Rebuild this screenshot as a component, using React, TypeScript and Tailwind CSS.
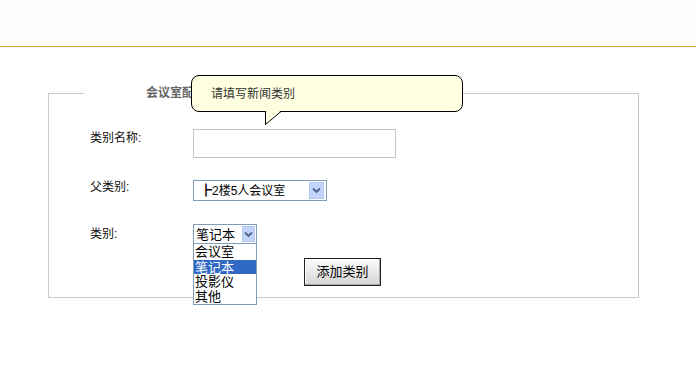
import React from "react";

const font = { fontFamily: '"Liberation Sans", "Noto Sans CJK SC", sans-serif' };

function Chevron() {
  return (
    <svg width="9" height="7" viewBox="0 0 9 7">
      <path d="M1 1.5 L4.5 5 L8 1.5" fill="none" stroke="#4d6185" strokeWidth="1.8" />
    </svg>
  );
}

export default function App() {
  return (
    <div className="relative w-[696px] h-[368px] bg-white overflow-hidden text-[12px] text-[#222]" style={font}>
      <div className="h-[46px] bg-[#fefffd]" />
      <div className="h-[1px] bg-[#e3a940]" />

      <fieldset className="ml-[48px] mt-[38px] w-[591px] border border-[#c9c9c9] px-[35px] pb-[11px]">
        <legend className="pl-[62px] pr-[4px] leading-[17px] font-bold text-[#666]">会议室配置</legend>

        <div className="pl-[6px]">
          <div className="mt-[27px] flex items-start">
            <span className="w-[103px] text-[#111] leading-[16px] mt-[1px]">类别名称:</span>
            <div className="w-[203px] h-[29px] border border-[#c4c4c4] bg-white" />
          </div>

          <div className="mt-[22px] flex items-start">
            <span className="w-[103px] text-[#111] leading-[16px] -mt-[1px]">父类别:</span>
            <div className="w-[134px] h-[21px] border border-[#7f9db9] bg-white flex items-center justify-between pl-[6px] pr-[2px]">
              <span className="text-[12px] text-black leading-none">
                <span className="font-bold">┣</span>2楼5人会议室
              </span>
              <span className="w-[15px] h-[17px] bg-[#c3d5fd] border border-[#b5c8f0] flex items-center justify-center">
                <Chevron />
              </span>
            </div>
          </div>

          <div className="mt-[23px] flex items-start">
            <span className="w-[103px] text-[#111] leading-[16px] mt-[2px]">类别:</span>
            <div className="relative">
              <div className="w-[64px] h-[20px] border border-[#7f9db9] bg-white flex items-center justify-between pl-[2px] pr-[1px]">
                <span className="text-[13px] text-black leading-none">笔记本</span>
                <span className="w-[13px] h-[16px] bg-[#c3d5fd] border border-[#b5c8f0] flex items-center justify-center">
                  <Chevron />
                </span>
              </div>
              <div className="absolute left-0 top-[19px] w-[64px] h-[62px] border border-[#7f9db9] bg-white text-[13px] text-black leading-[15px]">
                <div className="h-[16px] pl-[1px]">会议室</div>
                <div className="h-[14px] pl-[1px] bg-[#316ac5] text-white">笔记本</div>
                <div className="h-[15px] pl-[1px]">投影仪</div>
                <div className="h-[15px] pl-[1px]">其他</div>
              </div>
            </div>
          </div>

          <div className="mt-[14px] pl-[214px] flex">
            <button className="w-[77px] h-[28px] border border-[#1f1f1f] bg-gradient-to-b from-[#fcfcfc] to-[#d4d4d4] text-[13px] text-black shadow-[inset_-1px_-1px_0_#a8a8a8,inset_1px_1px_0_#ffffff]">
              添加类别
            </button>
          </div>
        </div>
      </fieldset>

      <div className="absolute left-[191px] top-[75px] w-[272px] h-[37px] rounded-[8px] border border-black bg-[#ffffe1] flex items-center pl-[19px] text-[12px] text-[#333]">
        请填写新闻类别
        <svg className="absolute left-[72px] top-[34px]" width="20" height="16" viewBox="0 0 20 16">
          <polygon points="1.5,0 1.5,14.5 17.5,0" fill="#ffffe1" />
          <path d="M1.5 1 L1.5 14.5 L17 1.5" fill="none" stroke="#000" strokeWidth="1" />
        </svg>
      </div>
    </div>
  );
}
